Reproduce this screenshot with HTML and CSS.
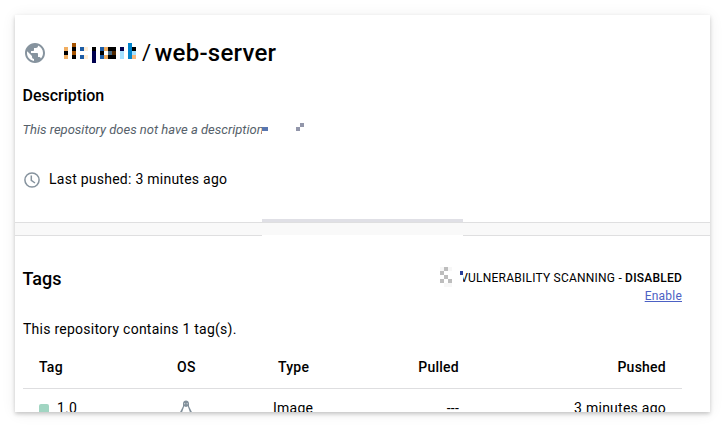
FILE: index.html
```html
<!DOCTYPE html>
<html lang="en">
<head>
<meta charset="utf-8">
<title>Repository</title>
<link rel="stylesheet" href="styles.css">
</head>
<body>
<main class="card">
  <section class="summary">
    <header class="repo">
      <svg class="globe" viewBox="0 0 24 24"><path d="M12 2C6.48 2 2 6.48 2 12s4.48 10 10 10 10-4.480 10-10S17.520 2 12 2zm-1 17.930c-3.950-.490-7-3.850-7-7.930 0-.620.080-1.210.210-1.790L9 15v1c0 1.100.900 2 2 2v1.930zm6.900-2.540c-.260-.810-1-1.390-1.900-1.390h-1v-3c0-.550-.450-1-1-1H8v-2h2c.550 0 1-.450 1-1V7h2c1.100 0 2-.900 2-2v-.410c2.930 1.190 5 4.060 5 7.410 0 2.080-.800 3.970-2.100 5.390z"/></svg>
      <svg class="owner" viewBox="0 0 18 5" shape-rendering="crispEdges">
        <path fill="#f0ad60" d="M0 1h1v1h-1zM0 3h1v1h-1zM10 1h1v1h-1zM10 3h1v1h-1z"/>
        <path fill="#a55300" d="M2 0h1v1h-1zM2 2h1v1h-1z"/>
        <path fill="#000" d="M0 2h1v1h-1zM2 1h1v1h-1zM2 3h1v1h-1zM7 1h1v1h-1zM9 2h1v1h-1zM11 1h1v1h-1zM11 3h2v1h-2zM12 1h1v1h-1zM16 2h1v1h-1zM17 1h1v1h-1z"/>
        <path fill="#1c5ca5" d="M4 1h1v1h-1zM4 3h1v1h-1zM9 1h1v1h-1zM9 3h1v1h-1z"/>
        <path fill="#ffedd5" d="M5 1h1v1h-1zM5 3h1v1h-1z"/>
        <path fill="#00004f" d="M7 2h1v3h-1zM14 1h1v1h-1z"/>
        <path fill="#4c6c83" d="M11 2h1v1h-1z"/>
        <path fill="#4f2800" d="M12 2h1v1h-1z"/>
        <path fill="#a4e1ff" d="M14 2h1v2h-1zM17 2h1v1h-1z"/>
        <path fill="#0084cc" d="M16 0h1v2h-1zM16 2h1v2h-1z"/>
        <path fill="#f6b77c" d="M17 3h1v1h-1z"/>
      </svg>
      <span class="slash">/</span>
      <h1>web-server</h1>
    </header>
    <h2>Description</h2>
    <div class="description">
      <em>This repository does not have a description</em>
      <svg class="edit" viewBox="0 0 48 8" shape-rendering="crispEdges"><path fill="#5876b0" d="M0 4h6v4H0z"/><path fill="#9296aa" d="M38 0h4v4h-4zM34 4h4v4h-4z"/></svg>
    </div>
    <div class="last">
      <svg class="clock" viewBox="0 0 16 16"><circle cx="8" cy="8" r="7.100"/><path d="M7.300 3.500V8.400L11 11"/></svg>
      <span>Last pushed: 3 minutes ago</span>
    </div>
    <div class="handle"></div>
  </section>
  <div class="divider"></div>
  <section class="tags">
    <div class="tags-head">
      <h2>Tags</h2>
      <div class="scan">
        <div class="scan-state">
          <svg class="scan-icon" viewBox="0 0 24 20" shape-rendering="crispEdges"><path fill="#bdbdbd" d="M4 0h4v4H4zM0 4h4v4H0zM4 8h4v4H4zM0 12h4v4H0zM8 12h4v4H8z"/><path fill="#f7f7f7" d="M0 0h4v4H0zM8 0h4v4H8zM4 16h8v4H4z"/><path fill="#fff" d="M16 0h7v20h-7z"/><path fill="#283f99" d="M20 4h3v4h-3z"/></svg>
          <span class="scan-label">VULNERABILITY SCANNING - <b>DISABLED</b></span>
        </div>
        <a>Enable</a>
      </div>
    </div>
    <p>This repository contains 1 tag(s).</p>
    <div class="row heading"><span>Tag</span><span>OS</span><span>Type</span><span>Pulled</span><span>Pushed</span></div>
    <div class="row item">
      <span class="tag"><i></i>1.0</span>
      <span><svg class="tux" viewBox="0 0 14 18"><path d="M4 3.500C4-.5 10-.5 10 3.500v2.700l3 6V18H1v-5.800l3-6z" fill="#82909b"/><path d="M5.200 6.200L7 7l1.800-.800L11.200 13v5H2.800v-5z" fill="#fff"/><path d="M5 3.200h1.200v1H5zM7.600 3.200h1.200v1H7.600z" fill="#dce1e4"/></svg></span>
      <span class="kind">Image</span><span>---</span><span>3 minutes ago</span>
    </div>
  </section>
</main>
</body>
</html>
```
FILE: styles.css
```css
* { box-sizing: border-box; }
body {
  margin: 0;
  padding: 15px;
  height: 427px;
  overflow: hidden;
  background: #fff;
  color: #000;
  font: 14px/20px Roboto, sans-serif;
}
h1, h2, p { margin: 0; font-weight: 500; }
svg { display: block; flex: none; }
.card {
  width: 695px;
  height: 397px;
  overflow: hidden;
  background: #fff;
  box-shadow: 0 2px 4px rgba(0, 0, 0, .2), 0 1px 14px rgba(0, 0, 0, .07);
}
.summary {
  display: flex;
  flex-direction: column;
  height: 207px;
  padding: 22px 8px 0;
}
.repo { display: flex; align-items: center; height: 32px; }
.globe { width: 24px; height: 24px; fill: #86939e; }
.owner { width: 72px; height: 20px; margin-left: 17px; }
.slash { width: 9px; margin-left: 6px; font-size: 22px; line-height: 32px; }
h1 { margin-left: 3.5px; font-size: 24px; line-height: 32px; letter-spacing: .25px; }
.summary h2 { margin: 15px 0 0 -.5px; font-size: 16px; line-height: 24px; }
.description { display: flex; margin-top: 12px; height: 20px; color: #56616a; }
.description em { width: 239px; overflow: hidden; white-space: nowrap; font-size: 13px; text-indent: -.5px; }
.edit { width: 48px; height: 8px; margin-top: 3px; }
.last { display: flex; align-items: center; height: 20px; margin-top: 29px; letter-spacing: .25px; }
.clock { width: 16px; height: 16px; margin: 1px 9px 0 1px; fill: none; stroke: #86939e; stroke-width: 1.5; }
.handle { width: 201px; height: 3px; margin: auto 0 0 239px; background: #e0e0e6; }
.divider { height: 14px; background: #f9f9f9; border: solid #dfdfe0; border-width: 1px 0; }
.divider::after {
  content: "";
  display: block;
  width: 201px;
  height: 1px;
  margin: 12px 0 0 247px;
  background: #fff;
  position: relative;
}
.tags { padding: 31px 28px 0 8px; }
.tags-head { display: flex; justify-content: space-between; height: 52px; }
.tags h2 { margin-left: -.5px; font-size: 18px; line-height: 24px; }
.scan { display: flex; flex-direction: column; align-items: flex-end; font-size: 12px; line-height: 18px; letter-spacing: .22px; }
.scan-state { display: flex; height: 20px; }
.scan-label { padding-top: 2px; white-space: nowrap; }
.scan-icon { position: relative; z-index: 1; width: 24px; height: 20px; margin: 0 -4px 0 0; }
.scan b { font-weight: 500; }
.scan a { color: #4c61c4; text-decoration: underline; }
.tags p { font-weight: 400; letter-spacing: .25px; }
.row { display: grid; grid-template-columns: 138px 101px 99px 82px 207px; padding: 0 16px; letter-spacing: .25px; }
.row span:nth-child(n+4) { text-align: right; }
.heading { margin-top: 6px; height: 44px; padding-top: 12px; line-height: 20px; font-weight: 500; border-bottom: 1px solid #dedee0; }
.item { padding-top: 9px; height: 40px; }
.kind { margin-left: -5px; }
.tag { display: flex; }
.tag i { width: 10px; height: 12px; margin: 6px 8px 0 0; border-radius: 2px; background: #a1d5c2; }
.tux { width: 14px; height: 18px; margin: 2px 0 0 2px; }
```
